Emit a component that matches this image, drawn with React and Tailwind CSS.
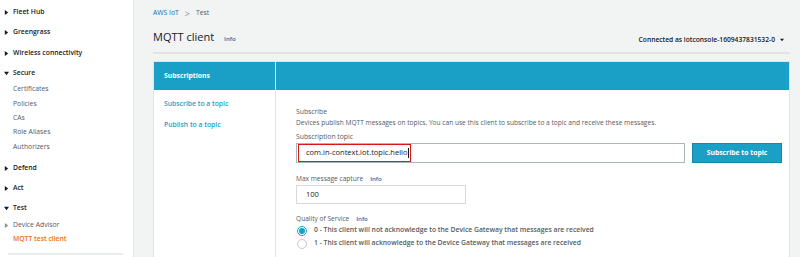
import React from "react";

const navRows = [
  { label: "Fleet Hub", type: "head", open: false, h: "h-[20px]" },
  { label: "Greengrass", type: "head", open: false, h: "h-[21px]" },
  { label: "Wireless connectivity", type: "head", open: false, h: "h-[21px]" },
  { label: "Secure", type: "head", open: true, h: "h-[18px]" },
  { label: "Certificates", type: "sub", h: "h-[15px]" },
  { label: "Policies", type: "sub", h: "h-[14px]" },
  { label: "CAs", type: "sub", h: "h-[14px]" },
  { label: "Role Aliases", type: "sub", h: "h-[15px]" },
  { label: "Authorizers", type: "sub", h: "h-[15px]" },
  { label: "Defend", type: "head", open: false, h: "h-[20px] mt-[3px]" },
  { label: "Act", type: "head", open: false, h: "h-[21px]" },
  { label: "Test", type: "head", open: true, h: "h-[19px]" },
  { label: "Device Advisor", type: "subarrow", h: "h-[14px]" },
  { label: "MQTT test client", type: "active", h: "h-[14px]" },
];

const Caret = ({ open, light, size = 6 }) => (
  <svg width={size} height={size} viewBox="0 0 6 6" className="shrink-0">
    {open ? (
      <path d="M0 1 L6 1 L3 5 Z" fill={light ? "#879196" : "#16191f"} />
    ) : (
      <path d="M1 0 L5 3 L1 6 Z" fill={light ? "#879196" : "#16191f"} />
    )}
  </svg>
);

function Sidebar() {
  return (
    <div className="w-[134px] shrink-0 bg-white border-r border-[#e3e6e6] pt-[2px] relative">
      {navRows.map((r) => (
        <div key={r.label} className={`${r.h} flex items-center`}>
          {r.type === "head" && (
            <div className="flex items-center gap-[4px] pl-[4px] text-[6.8px] font-semibold text-[#16191f]">
              <Caret open={r.open} size={5} />
              <span>{r.label}</span>
            </div>
          )}
          {r.type === "sub" && (
            <span className="pl-[13px] text-[6.8px] text-[#545b64]">{r.label}</span>
          )}
          {r.type === "subarrow" && (
            <div className="flex items-center gap-[4px] pl-[4px] text-[6.8px] text-[#545b64]">
              <Caret light size={5} />
              <span>{r.label}</span>
            </div>
          )}
          {r.type === "active" && (
            <span className="pl-[13px] text-[6.8px] font-semibold text-[#ec7211]">{r.label}</span>
          )}
        </div>
      ))}
      <div className="absolute left-[8px] right-[10px] bottom-[2px] h-[2px] bg-[#eaeded]" />
    </div>
  );
}

function Info() {
  return <span className="text-[6px] font-semibold text-[#0073bb]">Info</span>;
}

function Radio({ checked, label }) {
  return (
    <div className="flex items-center h-[13px] gap-[7px] pl-[1px]">
      {checked ? (
        <span className="w-[10px] h-[10px] rounded-full border border-[#1a9fc6] flex items-center justify-center bg-white">
          <span className="w-[6px] h-[6px] rounded-full bg-[#1a9fc6]" />
        </span>
      ) : (
        <span className="w-[10px] h-[10px] rounded-full border border-[#c7ccd0] bg-white" />
      )}
      <span className="text-[6.8px] font-semibold text-[#545b64]">{label}</span>
    </div>
  );
}

export default function App() {
  return (
    <div
      className="w-[800px] h-[257px] overflow-hidden flex bg-[#f2f3f3]"
      style={{ fontFamily: '"Open Sans", "Noto Sans", sans-serif' }}
    >
      <Sidebar />
      <div className="flex-1 pl-[19px] pr-[10px]">
        <div className="pt-[8px] h-[18px] flex items-center gap-[6px] text-[6.8px]">
          <span className="text-[#0073bb]">AWS IoT</span>
          <span className="text-[#879196] text-[9px] leading-none">&gt;</span>
          <span className="text-[#545b64]">Test</span>
        </div>
        <div className="h-[34px] flex items-center justify-between pt-[4px]">
          <div className="flex items-baseline gap-[10px]">
            <span className="text-[11px] text-[#16191f]">MQTT client</span>
            <Info />
          </div>
          <div className="flex items-center gap-[5px] pt-[6px] pr-[6px] text-[6.7px] font-semibold text-[#16191f]">
            <span>Connected as iotconsole-1609437831532-0</span>
            <Caret open size={4} />
          </div>
        </div>
        <div className="h-[2px] bg-[#e1e4e4]" />
        <div className="mt-[7px] flex bg-white border border-[#e1e4e4] h-[200px]">
          <div className="w-[122px] shrink-0 border-r border-[#e1e4e4]">
            <div className="h-[28px] bg-[#1a9fc6] flex items-center pl-[10px] text-[6.8px] font-bold text-white">
              Subscriptions
            </div>
            <div className="pl-[10px] pt-[8px] text-[6.8px] font-semibold text-[#1a9fc6]">
              <div className="h-[12px] flex items-center">Subscribe to a topic</div>
              <div className="h-[9px]" />
              <div className="h-[12px] flex items-center">Publish to a topic</div>
            </div>
          </div>
          <div className="flex-1">
            <div className="h-[28px] bg-[#1a9fc6]" />
            <div className="pl-[20px] pr-[7px] pt-[17px]">
              <div className="h-[10px] flex items-center text-[6.8px] text-[#545b64]">Subscribe</div>
              <div className="h-[10px] mt-[1px] flex items-center text-[6.6px] text-[#545b64]">
                Devices publish MQTT messages on topics. You can use this client to subscribe to a topic and receive these messages.
              </div>
              <div className="h-[10px] mt-[4px] flex items-center text-[6.8px] text-[#545b64]">Subscription topic</div>
              <div className="mt-[1px] flex gap-[7px]">
                <div className="flex-1 h-[20px] border border-[#aab7b8] bg-white flex items-center pl-[1px]">
                  <div className="h-[18px] w-[113px] border border-[#d91515] flex items-center pl-[7px] text-[7.5px] text-[#16191f]">
                    com.in-context.iot.topic.hello<span className="w-px h-[10px] bg-[#16191f] ml-px" />
                  </div>
                </div>
                <div className="w-[90px] h-[20px] bg-[#1a9fc6] border border-[#1588ab] flex items-center justify-center text-[6.8px] font-bold text-white">
                  Subscribe to topic
                </div>
              </div>
              <div className="h-[10px] mt-[11px] flex items-center gap-[7px] text-[6.6px] text-[#545b64]">
                <span>Max message capture</span>
                <Info />
              </div>
              <div className="mt-[1px] w-[170px] h-[19px] border border-[#d5dbdb] bg-white flex items-center pl-[9px] text-[7.5px] text-[#16191f]">
                100
              </div>
              <div className="h-[10px] mt-[10px] flex items-center gap-[7px] text-[6.6px] text-[#545b64]">
                <span>Quality of Service</span>
                <Info />
              </div>
              <Radio checked label="0 - This client will not acknowledge to the Device Gateway that messages are received" />
              <Radio label="1 - This client will acknowledge to the Device Gateway that messages are received" />
            </div>
          </div>
        </div>
      </div>
    </div>
  );
}
